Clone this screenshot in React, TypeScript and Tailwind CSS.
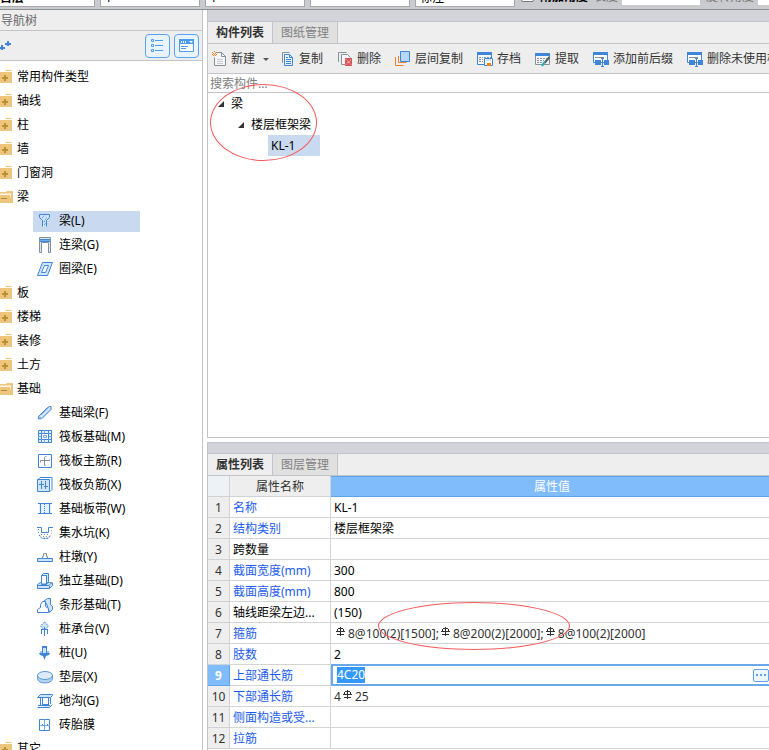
import React from 'react';

const B = '#3f86d8';
const L = '#cfe3f9';
const G = '#84929c';
const O = '#f08223';

function Svg({ children, w = 16, h = 16 }: { children: React.ReactNode; w?: number; h?: number }) {
  return (
    <svg width={w} height={h} viewBox={`0 0 ${w} ${h}`} fill="none" className="block shrink-0" aria-hidden="true">
      {children}
    </svg>
  );
}

const icons: Record<string, React.ReactNode> = {
  beam: (
    <>
      <path d="M3.5 1.5h10v3l-3 3v6h-5v-6l-2-3z" fill={L} />
      <path d="M2.5 1.5h10v3l-3 3v6M2.5 1.5v3l3 3v6" stroke={B} />
      <path d="M5 5l3-3M7 9l3-5M7 12l2-2" stroke={B} strokeDasharray="1 1" />
    </>
  ),
  coupling: (
    <>
      <path d="M2.5 15.5v-15h11v15h-2v-10h-7v10z" fill="#dfe5ea" stroke={G} />
      <path d="M3 2h10v3H3z" fill={B} />
      <path d="M3 3h10v1H3z" fill="#6facf0" />
    </>
  ),
  ring: (
    <>
      <path d="M5.5 1.5h10l-5 13h-10z" fill={L} stroke={B} />
      <path d="M7.5 4.5h4l-3 7h-4z" fill="#fff" stroke={B} />
    </>
  ),
  foundBeam: (
    <>
      <path d="M1.5 11.5l9-9 2-1 1.5 0v3l-9 9-3.500 .5z" fill={L} stroke={B} />
      <path d="M1.500 11l3.500 3M4 10l8-8M5.500 12.500l8-8" stroke="#77aae6" />
    </>
  ),
  raft: (
    <>
      <path d="M1.500 1.500h13v12h-13z" fill="#e4f0fc" stroke={B} />
      <path d="M4.500 4.500h7v6h-7z" fill="#fff" stroke={B} />
      <path d="M4.500 1v3M11.500 1v3M4.500 11v3M11.500 11v3M1 4.500h3M12 4.500h3M1 10.500h3M12 10.500h3" stroke={B} />
      <path d="M7.500 1v3M7.500 11v3M1 7.500h3M12 7.500h3M6.500 6.500h3v2h-3z" stroke="#77aae6" />
    </>
  ),
  raftMain: (
    <>
      <path d="M1.500 1.500h13v13h-13z" fill="#fff" stroke={B} />
      <path d="M8.500 12.500h-1v-8q0-1 2-1M3.500 9.500v-2h9v-1" stroke={G} />
    </>
  ),
  raftNeg: (
    <>
      <path d="M.5 2.500h12v12H.5z" fill={L} stroke={B} />
      <path d="M1 2.500l2-2h12v12l-2 2" stroke={B} />
      <path d="M4.500 4v8M8.500 4v8M2 7.500h5M7 9.500h4" stroke={B} />
    </>
  ),
  strip: (
    <>
      <path d="M2 2h12v10H2z" fill="#e4f0fc" />
      <path d="M1 2.500h14M1 12.500h14" stroke={B} />
      <path d="M3.500 3v9M12.500 3v9" stroke={B} />
      <path d="M7.500 3v9" stroke={B} strokeDasharray="1 1" />
    </>
  ),
  pit: (
    <>
      <path d="M0 2.500h4.500v5h7v-5H16" stroke={B} />
      <path d="M1.500 4v5l4 4h5l4-4V4" stroke={G} strokeDasharray="1 2" />
      <path d="M4 9.500h8M6 11.500h5" stroke={G} strokeDasharray="1 2" />
      <path d="M2 10l3 3.500h6l3-3.500" stroke={B} strokeDasharray="2 1" />
    </>
  ),
  pier: (
    <>
      <path d="M5.500 9V7.500h1v-3h3v3h1V9" stroke={G} />
      <path d="M.5 9.500h15v3H.5z" fill={L} stroke={B} />
    </>
  ),
  isolated: (
    <>
      <path d="M.5 11.500l3-2h9l3 .5v2.500l-3 3H.5z" fill={L} stroke={B} />
      <path d="M1 12.500h11l3-3M12.500 13v2" stroke={B} />
      <path d="M4.500 2.500l2-2h5v8l-2 3h-5z" fill={L} stroke={B} />
      <path d="M4.500 2.500h5v8.500h-5z" fill="#fff" stroke={B} />
    </>
  ),
  stripFound: (
    <>
      <path d="M6.500 4.500l4-3h3v6l2 2v3l-3 3-3-9z" fill={L} stroke={B} />
      <path d="M.5 15.500v-3l3-2v-3l2-3h3v5l3 2v4z" fill="#fff" stroke={B} />
    </>
  ),
  cap: (
    <>
      <path d="M7.500 1l4 4-4 4-4-4z" fill={L} stroke={B} strokeDasharray="2 1" />
      <path d="M7.500 6v9M4.500 8v5M10.500 8v5" stroke={B} />
      <path d="M4 8.500h7" stroke={B} />
    </>
  ),
  pile: (
    <>
      <path d="M5.500 1.500h4v7h-4z" fill={L} stroke={B} />
      <path d="M5 1h5v2H5zM2 8h11l-1 2-3 1-1.500 4L6 11l-3-1z" fill={B} />
      <path d="M3 6h2v2H3zM10 6h2v2h-2z" fill="#9cc4f1" />
    </>
  ),
  cushion: (
    <>
      <path d="M.5 6.500v3c0 6 15 6 15 0v-3z" fill="#b5d2f3" stroke="#5f97d8" />
      <ellipse cx="8" cy="6.500" rx="7.500" ry="4" fill="#dceafa" stroke="#5f97d8" />
    </>
  ),
  trench: (
    <>
      <path d="M.5 4.500l3-3h12v1l-2 2zM.5 14.500h12l3-3" fill={L} stroke={B} />
      <path d="M3.500 5v8M5.500 5v8M11.500 5v8M13.500 5v6M1 12.500h12M5 11.500h6" stroke={B} />
    </>
  ),
  brick: (
    <>
      <path d="M2.500 2.500h10v11h-10z" fill="#fff" stroke={B} />
      <path d="M7.500 2v11M3 8.500h10" stroke="#6facf0" />
      <path d="M5 7h1v1H5zM10 7h1v1h-1z" fill={B} />
    </>
  ),
  create: (
    <>
      <path d="M4.500 1.500h6l4 4v9h-11v-8" fill="#f6f6f6" stroke={G} />
      <path d="M10.500 1.500v4h4" stroke={G} />
      <path d="M6 8.500h6M6 10.500h6M6 12.500h6" stroke="#c7cdd2" />
      <path d="M1 1h1v1H1zM3 0h1v1H3zM5 1h1v1H5zM2 2h1v1H2zM4 2h1v1H4zM1 3h1v1H1zM5 3h1v1H5zM3 3h1v1H3zM2 4h1v1H2zM4 4h1v1H4z" fill={O} />
    </>
  ),
  copy: (
    <>
      <path d="M3.500 12V1.500h7" stroke={G} />
      <path d="M5.500 3.500h5l3 3v8h-8z" fill="#e4f0fc" stroke={B} />
      <path d="M10.500 3.500v3h3M7 8.500h5M7 10.500h5M7 12.500h5M7 6.500h2" stroke={B} />
    </>
  ),
  remove: (
    <>
      <path d="M1.500 11V1.500h8" stroke={G} />
      <path d="M8 13.500H4.500v-10h6l3 3" fill="#f6f6f6" stroke={G} />
      <path d="M8 7h7v8H8z" fill="#d9545a" />
      <path d="M9 8.500l5 5M14 8.500l-5 5" stroke="#fff" strokeDasharray="1 1" />
    </>
  ),
  floors: (
    <>
      <path d="M.5 6v8.500h8M3.500 5v6.500h8" stroke={O} />
      <path d="M5.500 .5h9v10h-9z" fill="#b5d7fb" stroke={B} />
    </>
  ),
  archive: (
    <>
      <path d="M.5 1.500h14v12H.5z" fill="#f6f6f6" stroke={B} />
      <path d="M0 1h15v3H0z" fill={B} />
      <path d="M2 6.500h4M2 8.500h4M2 10.500h4M7 6.500h7" stroke={G} strokeDasharray="2 1" />
      <path d="M7.500 7.500h8v7h-8z" fill="#fff" stroke={B} />
      <path d="M9 8h5v2H9z" fill={L} />
      <path d="M10 12h4v3h-4z" fill={O} />
    </>
  ),
  extract: (
    <>
      <path d="M.5 2.500h14v11H.5z" fill="#f6f6f6" stroke={G} />
      <path d="M0 2h15v3H0z" fill={B} />
      <path d="M2 7.500h10M2 9.500h7M2 11.500h6" stroke={G} strokeDasharray="2 1" />
      <path d="M14.500 6l-5 6" stroke="#53616c" strokeWidth="2" />
      <path d="M9.500 11L7 15" stroke="#28a9b5" strokeWidth="2" />
    </>
  ),
  affix: (
    <>
      <path d="M.5 1.500h14v10H.5z" fill="#fff" stroke={B} />
      <path d="M0 1h15v3H0z" fill={B} />
      <path d="M2 6.500h9" stroke={G} />
      <path d="M2 9h6v5H2zM11 9h5v5h-5z" fill={B} />
      <path d="M9.500 8v7M8 7.500h3M8 15.500h3" stroke={B} />
    </>
  ),
};

function Folder({ open }: { open?: boolean }) {
  return open ? (
    <Svg w={13} h={14}>
      <path d="M0 2h6l1-1h6v12H0z" fill="#edc67d" />
      <path d="M0 3.500h11v7l-2-5H0z" fill="#fff8ea" />
      <path d="M0 5h10l2 7H0z" fill="#edc67d" />
      <path d="M1 8.500h6" stroke="#b98a37" />
    </Svg>
  ) : (
    <Svg w={13} h={14}>
      <path d="M6 0h5l1 1H5z" fill="#edc67d" />
      <path d="M0 2h12v11H0z" fill="#edc67d" />
      <path d="M2 7h6v2H2zM4 5h2v6H4z" fill="#bd8d38" />
    </Svg>
  );
}

type Node = { t: string; open?: boolean; kids?: [string, string][] };

const tree: Node[] = [
  { t: '常用构件类型' },
  { t: '轴线' },
  { t: '柱' },
  { t: '墙' },
  { t: '门窗洞' },
  { t: '梁', open: true, kids: [['beam', '梁(L)'], ['coupling', '连梁(G)'], ['ring', '圈梁(E)']] },
  { t: '板' },
  { t: '楼梯' },
  { t: '装修' },
  { t: '土方' },
  {
    t: '基础',
    open: true,
    kids: [
      ['foundBeam', '基础梁(F)'],
      ['raft', '筏板基础(M)'],
      ['raftMain', '筏板主筋(R)'],
      ['raftNeg', '筏板负筋(X)'],
      ['strip', '基础板带(W)'],
      ['pit', '集水坑(K)'],
      ['pier', '柱墩(Y)'],
      ['isolated', '独立基础(D)'],
      ['stripFound', '条形基础(T)'],
      ['cap', '桩承台(V)'],
      ['pile', '桩(U)'],
      ['cushion', '垫层(X)'],
      ['trench', '地沟(G)'],
      ['brick', '砖胎膜'],
    ],
  },
  { t: '其它' },
];

function Sidebar() {
  return (
    <aside className="flex w-[203px] shrink-0 flex-col overflow-hidden border-r border-[#c3c4ca]">
      <h2 className="h-[21px] shrink-0 border-b border-[#c3c4ca] bg-[#eeeeee] pl-px pt-px leading-5 text-[#666666]">导航树</h2>
      <div className="flex h-[30px] shrink-0 items-center gap-1 border-b border-[#c3c4ca] bg-[#eeeeee] pr-[3px]">
        <button type="button" aria-label="展开" className="mr-auto">
          <Svg w={12} h={12}>
            <path d="M0 8h5M2 5v5M5 4h6M8 1v5" stroke={B} strokeWidth="2" />
          </Svg>
        </button>
        <button type="button" aria-label="列表" className="flex h-6 w-[25px] items-center justify-center rounded-sm border border-[#56a5f5] bg-[#e9f3fe]">
          <Svg w={13} h={14}>
            <path d="M.5.5h2v2h-2zM.5 5.500h2v2h-2zM.5 10.500h2v2h-2zM4 1.500h8M4 6.500h8M4 11.500h8" stroke="#4c9df0" />
          </Svg>
        </button>
        <button type="button" aria-label="窗口" className="flex h-6 w-[25px] items-center justify-center rounded-sm border border-[#56a5f5] bg-[#e9f3fe]">
          <Svg w={15} h={13}>
            <path d="M.5.5h14v12H.5z" fill="#fff" stroke="#4c9df0" />
            <path d="M0 0h15v5H0z" fill="#4c9df0" />
            <path d="M2 2h1v2H2zM4 2h1v2H4zM6 2h1v2H6zM10 2h4l-2 2z" fill="#fff" />
            <path d="M2 7.500h7M2 9.500h5" stroke="#4c9df0" />
          </Svg>
        </button>
      </div>
      <ul className="pt-1 text-black">
        {tree.map((n) => (
          <li key={n.t}>
            <div className="flex h-6 items-center gap-1">
              <Folder open={n.open} />
              <span>{n.t}</span>
            </div>
            {n.kids && (
              <ul className="pl-[33px]">
                {n.kids.map(([icon, label]) => (
                  <li key={label} className="flex h-6 items-center">
                    <div className={`flex h-[21px] w-[107px] items-center gap-1.5 pl-1 ${icon === 'beam' ? 'bg-[#c9d9ef]' : ''}`}>
                      <Svg>{icons[icon]}</Svg>
                      <span className="whitespace-nowrap">{label}</span>
                    </div>
                  </li>
                ))}
              </ul>
            )}
          </li>
        ))}
      </ul>
    </aside>
  );
}

function Tabs({ active, other, topLine }: { active: string; other: string; topLine?: boolean }) {
  return (
    <>
      <div className={`h-3 shrink-0 border-b border-[#c3c4ca] bg-[#d3d4da] ${topLine ? 'border-t' : ''}`} />
      <div role="tablist" className="flex h-[22px] shrink-0 border-b border-[#c3c4ca] bg-[#eeeeee]">
        <button type="button" role="tab" aria-selected="true" className="w-[65px] border-r border-[#c3c4ca] font-bold text-[#333333]">
          {active}
        </button>
        <button type="button" role="tab" aria-selected="false" className="w-[65px] border-r border-[#c3c4ca] bg-[#e0e0e0] text-[#808080]">
          {other}
        </button>
      </div>
    </>
  );
}

const tools: [string, string][] = [
  ['create', '新建'],
  ['copy', '复制'],
  ['remove', '删除'],
  ['floors', '层间复制'],
  ['archive', '存档'],
  ['extract', '提取'],
  ['affix', '添加前后缀'],
  ['affix', '删除未使用构件'],
];

function Expander() {
  return (
    <Svg w={6} h={6}>
      <path d="M6 0v6H0z" fill="#333" />
    </Svg>
  );
}

function ComponentPanel() {
  return (
    <section className="relative flex min-h-0 flex-[428] flex-col border-b border-l border-[#c3c4ca]">
      <Tabs active="构件列表" other="图纸管理" />
      <div className="flex h-[30px] shrink-0 items-center gap-3.5 overflow-hidden border-b border-[#c3c4ca] bg-[#eeeeee] pl-[3px] text-[#333333]">
        {tools.map(([icon, label]) => (
          <button key={label} type="button" className="flex shrink-0 items-center gap-1 whitespace-nowrap">
            <Svg>{icons[icon]}</Svg>
            {label}
            {icon === 'create' && (
              <span className="-mr-1 ml-1">
                <Svg w={6} h={4}>
                  <path d="M0 1h6L3 4z" fill="#555" />
                </Svg>
              </span>
            )}
          </button>
        ))}
      </div>
      <input
        aria-label="搜索构件"
        placeholder="搜索构件..."
        className="h-[19px] w-full shrink-0 border-b border-[#c3c4ca] px-0.5 outline-none placeholder:text-[#808080]"
      />
      <ul className="text-black">
        <li className="flex h-[21px] items-center gap-1.5 pl-2.5">
          <Expander />
          <span className="pl-px">梁</span>
        </li>
        <li className="flex h-[21px] items-center gap-1.5 pl-[30px]">
          <Expander />
          <span className="pl-px">楼层框架梁</span>
        </li>
        <li className="ml-[60px] flex h-[21px] w-[52px] items-center bg-[#c9d9ef] pl-[3px]">KL-1</li>
      </ul>
      <div className="pointer-events-none absolute left-0.5 top-[74px] h-[77px] w-[107px] rounded-[50%] border border-[#f75c5c]" />
    </section>
  );
}

function Rebar() {
  return (
    <svg width="10" height="11" viewBox="0 0 10 11" fill="none" className="mx-0.5 inline-block align-baseline" role="img" aria-label="HRB400">
      <path d="M4.500 0v9M0 4.500h9M1 7.500h7M2 1.500h5M1.500 2v3M7.500 2v3" stroke="#333" shapeRendering="crispEdges" />
    </svg>
  );
}

const rows: { name: string; value?: React.ReactNode; plain?: boolean }[] = [
  { name: '名称', value: 'KL-1' },
  { name: '结构类别', value: '楼层框架梁' },
  { name: '跨数量', plain: true },
  { name: '截面宽度(mm)', value: '300' },
  { name: '截面高度(mm)', value: '800' },
  { name: '轴线距梁左边...', value: '(150)', plain: true },
  {
    name: '箍筋',
    value: (
      <span className="text-[#333333]">
        <Rebar />8@100(2)[1500];<Rebar />8@200(2)[2000];<Rebar />8@100(2)[2000]
      </span>
    ),
  },
  { name: '肢数', value: '2' },
  { name: '上部通长筋' },
  {
    name: '下部通长筋',
    value: (
      <span className="text-[#333333]">
        4<Rebar />25
      </span>
    ),
  },
  { name: '侧面构造或受...' },
  { name: '拉筋' },
];

function PropertyPanel() {
  return (
    <section className="flex min-h-0 flex-[308] flex-col overflow-hidden border-l border-[#c3c4ca]">
      <Tabs active="属性列表" other="图层管理" topLine />
      <div className="relative">
        <table className="w-full table-fixed border-separate border-spacing-0">
          <colgroup>
            <col className="w-[22px]" />
            <col className="w-[101px]" />
            <col />
          </colgroup>
          <thead>
            <tr className="h-[21px]">
              <th className="border-b border-r border-[#d0d2d6] bg-[#edf2f7] p-0" />
              <th className="border-b border-r border-[#d0d2d6] bg-[#eeeeee] p-0 pt-0.5 font-normal leading-[18px] text-[#333333]">属性名称</th>
              <th className="border-y border-[#5fa3e8] bg-[#80bbfb] p-0 pl-1 font-normal leading-[19px] text-white">属性值</th>
            </tr>
          </thead>
          <tbody>
            {rows.map((r, i) => {
              const on = i === 8;
              return (
                <tr key={r.name} className="h-[21px]">
                  <th
                    scope="row"
                    className={`border-b border-r p-0 pt-0.5 text-center leading-[18px] ${
                      on ? 'border-[#5fa3e8] bg-[#80bbfb] font-bold text-white' : 'border-[#d0d2d6] bg-[#eeeeee] font-normal text-[#333333]'
                    }`}
                  >
                    {i + 1}
                  </th>
                  <td className={`whitespace-nowrap border-b border-r border-[#d4d4d4] p-0 pl-[3px] pt-0.5 leading-[18px] ${r.plain ? 'text-black' : 'text-[#1c5cf0]'}`}>
                    {on ? <label htmlFor="top-bar">{r.name}</label> : r.name}
                  </td>
                  {on ? (
                    <td className="p-0">
                      <div className="-mt-px flex h-[22px] items-center justify-between border-y-2 border-l-2 border-[#6aa9e9] pl-1">
                        <input
                          id="top-bar"
                          defaultValue="4C20"
                          className="h-4 bg-[#3399ff] text-white outline-none [field-sizing:content]"
                        />
                        <button
                          type="button"
                          aria-label="更多"
                          className="flex h-[13px] w-4 items-center justify-center rounded-xs border border-[#5fa3e8] bg-[#eef5fc]"
                        >
                          <Svg w={10} h={2}>
                            <path d="M0 0h2v2H0zM4 0h2v2H4zM8 0h2v2H8z" fill="#5fa3e8" />
                          </Svg>
                        </button>
                      </div>
                    </td>
                  ) : (
                    <td className="whitespace-nowrap border-b border-[#d4d4d4] p-0 pl-[3px] pt-0.5 leading-[18px] text-black">{r.value}</td>
                  )}
                </tr>
              );
            })}
          </tbody>
        </table>
        <div className="pointer-events-none absolute left-[170px] top-[126px] h-12 w-[192px] rounded-[50%] border border-[#f75c5c]" />
      </div>
    </section>
  );
}

function TopStrip() {
  const box = 'flex h-6 w-[100px] shrink-0 items-end border border-[#a5a8ad] bg-white';
  return (
    <header className="flex h-2.5 shrink-0 items-end overflow-hidden border-b border-[#8b8f96] bg-[#c9cbcf] text-black">
      <div className="flex shrink-0 items-end gap-[5px] pb-0.5">
        <div className={`${box} -ml-[5px] pl-1 font-bold`}>首层</div>
        <div className={`${box} pl-1`}>1</div>
        <div className={`${box} pl-1`}>1</div>
        <div className={box} />
        <div className={`${box} pl-1`}>标注</div>
      </div>
      <label className="ml-1.5 flex shrink-0 items-end gap-1.5 pb-1 font-bold">
        <input type="checkbox" className="mb-[3px] size-[13px] appearance-none rounded-xs border border-[#777777] bg-white" />
        <span>附加角度</span>
      </label>
      <label className="flex shrink-0 items-end gap-1 pb-1 pl-1.5 text-[#777777]">
        <span>长度</span>
        <input className="h-6 w-[78px] bg-white" />
      </label>
      <label className="flex shrink-0 items-end gap-1 pb-1 pl-1.5 text-[#777777]">
        <span>旋转角度</span>
        <input className="h-6 w-[78px] bg-white" />
      </label>
    </header>
  );
}

export default function App() {
  return (
    <div className="flex h-screen flex-col overflow-hidden bg-white font-['Noto_Sans','Noto_Sans_CJK_SC',sans-serif] text-[12px] leading-4">
      <TopStrip />
      <main className="flex min-h-0 flex-1 gap-1">
        <Sidebar />
        <div className="flex min-w-0 flex-1 flex-col gap-1">
          <ComponentPanel />
          <PropertyPanel />
        </div>
      </main>
    </div>
  );
}
